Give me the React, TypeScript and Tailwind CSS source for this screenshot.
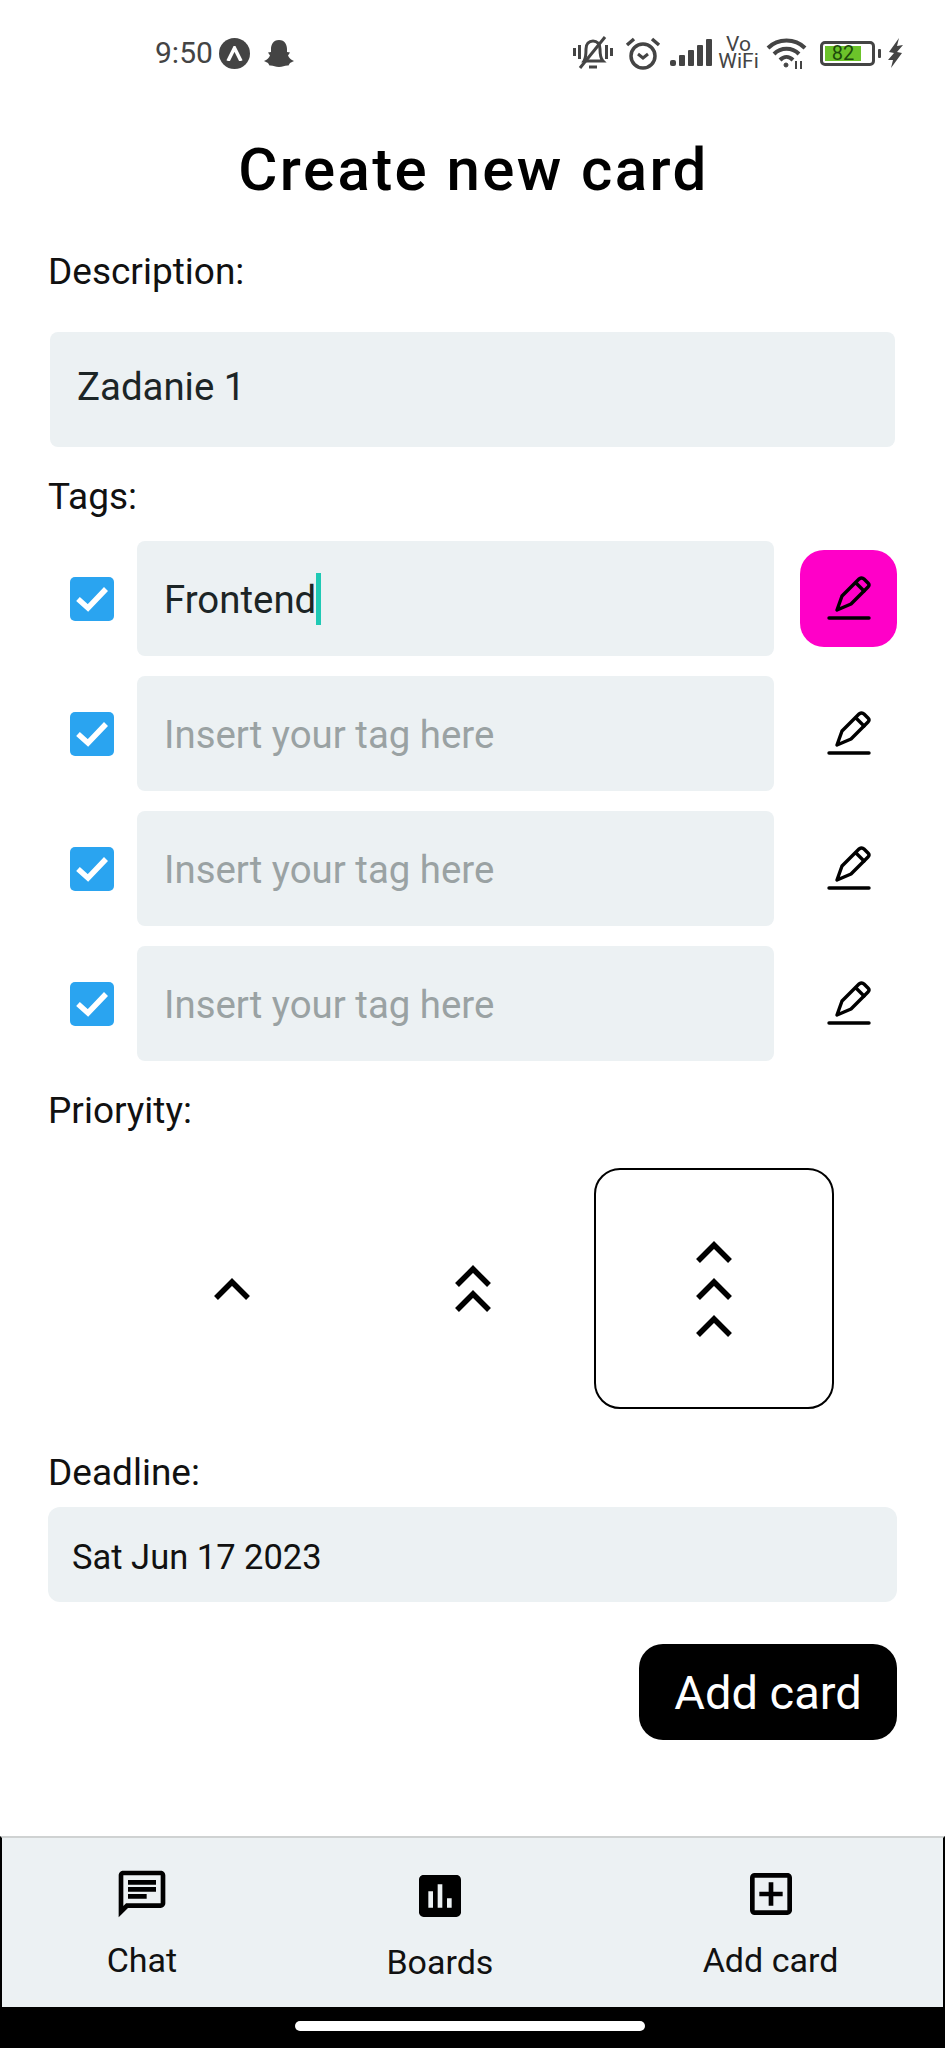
import { MdAssessment, MdOutlineAddBox, MdOutlineChat } from "react-icons/md";

const Pencil = () => (
  <svg width="46" height="46" viewBox="0 0 46 46" fill="none" stroke="#000" strokeWidth="3.4" strokeLinejoin="round" strokeLinecap="round">
    <path d="M11 34L16 20L33 3Q36 1 38 3L42 7Q44 9 42 11L25 28Z" />
    <path d="M30 7L38 15" />
    <path d="M3 42H43" />
  </svg>
);

const Chevron = () => (
  <svg width="36" height="22" viewBox="0 0 36 22" fill="none" stroke="#000" strokeWidth="5.5">
    <path d="M2 20L18 4L34 20" />
  </svg>
);

const Label = ({ children }: { children: string }) => (
  <div className="h-[44px] pt-[2px] text-[37px] leading-[44px] text-[#111]">{children}</div>
);

const Check = () => (
  <div className="flex h-[44px] w-[44px] shrink-0 items-center justify-center rounded-[5px] bg-[#2aa4f0]">
    <svg width="44" height="44" viewBox="0 0 44 44" fill="none" stroke="#fff" strokeWidth="5.5">
      <path d="M8 22L18 31L36 12" />
    </svg>
  </div>
);

const TagRow = ({ active }: { active?: boolean }) => (
  <div className="flex h-[115px] items-center pl-[22px]">
    <Check />
    <div className="ml-[23px] flex h-[115px] w-[637px] items-center rounded-[8px] bg-[#ecf1f3] pl-[27px] text-[38.400px]">
      {active ? (
        <>
          <span className="pt-[2px] text-[#1c2526]">Frontend</span>
          <span className="h-[52px] w-[5px] bg-[#1fc9b4]" />
        </>
      ) : (
        <span className="pt-[3px] text-[#9aa2a3]">Insert your tag here</span>
      )}
    </div>
    <div
      className={
        active
          ? "ml-[26px] flex h-[97px] w-[97px] items-center justify-center rounded-[24px] bg-[#ff00c8]"
          : "ml-[26px] flex h-[97px] w-[97px] items-center justify-center rounded-[24px]"
      }
    >
      <Pencil />
    </div>
  </div>
);

const StatusBar = () => (
  <div className="flex h-[104px] shrink-0 items-center pt-[2px] text-[#444]">
    <span className="ml-[155px] mb-[1px] text-[30px] leading-none">9:50</span>
    <div className="ml-[6px] flex h-[31px] w-[31px] items-center justify-center rounded-full bg-[#444]">
      <svg width="17" height="15" viewBox="0 0 17 15" fill="none" stroke="#fff" strokeWidth="3.500">
        <path d="M2 15L8.500 2L15 15" />
      </svg>
    </div>
    <svg className="ml-[14px]" width="30" height="27" viewBox="0 0 30 27" fill="#444">
      <path d="M15 0C21 0 23 5 23 9V12L26 12.500L24 15.500C25 18 27 20 30 21L26 23L24.500 25.500C21 25 19 27 15 27C11 27 9 25 5.500 25.500L4 23L0 21C3 20 5 18 6 15.500L4 12.500L7 12V9C7 5 9 0 15 0Z" />
    </svg>
    <div className="ml-auto mr-[42px] flex items-center">
      <svg width="40" height="34" viewBox="0 0 40 34" fill="none" stroke="#444" strokeWidth="3">
        <path d="M1.500 12V20M6.500 9V23M33.500 9V23M38.500 12V20" />
        <path d="M11 25C13 22 13 17 13 13C13 8 16 5 20 5C24 5 27 8 27 13C27 17 27 22 30 25Z" />
        <path d="M7 32L32 1" />
        <path d="M16 31H24" />
      </svg>
      <svg className="ml-[12px]" width="36" height="33" viewBox="0 0 36 33" fill="none" stroke="#444" strokeWidth="3.500">
        <circle cx="18" cy="19" r="12" />
        <path d="M13 17L18 21L23 17" strokeWidth="3" />
        <path d="M2 8L9 2M34 8L27 2" />
      </svg>
      <svg className="ml-[9px]" width="43" height="28" viewBox="0 0 43 28" fill="#444">
        <rect x="0" y="21" width="6" height="6" rx="2" />
        <rect x="9" y="16" width="6" height="11" rx="1" />
        <rect x="18" y="11" width="6" height="16" rx="1" />
        <rect x="27" y="6" width="6" height="21" rx="1" />
        <rect x="36" y="0" width="6" height="27" rx="1" />
      </svg>
      <div className="ml-[7px] flex w-[37px] flex-col items-center text-[21px] leading-[17px] font-normal">
        <span>Vo</span>
        <span>WiFi</span>
      </div>
      <svg className="ml-[9px]" width="41" height="32" viewBox="0 0 41 32" fill="none" stroke="#444" strokeWidth="4">
        <path d="M2 11C12 1 29 1 39 11" />
        <path d="M8 17C15 10 26 10 33 17" />
        <path d="M14 23C18 19 23 19 27 23" />
        <circle cx="20" cy="28" r="2" fill="#444" strokeWidth="1" />
        <path d="M30 24V32M35 24V32" strokeWidth="2" />
      </svg>
      <div className="ml-[13px] flex h-[25px] w-[55px] items-center rounded-[5px] border-[3px] border-[#444] p-[2px]">
        <div className="flex h-full w-[36px] items-center justify-center bg-[#6cc32a] text-[20px] leading-none text-[#1d4a0c]">
          82
        </div>
      </div>
      <div className="ml-[3px] h-[9px] w-[3px] rounded-[1px] bg-[#444]" />
      <svg className="ml-[7px]" width="15" height="30" viewBox="0 0 15 30" fill="#444">
        <path d="M11 0L1 14L6 15L0 22L5 22L3 30L14 15L9 14L15 7L9 8Z" />
      </svg>
    </div>
  </div>
);

const Tab = ({ label, icon, offset }: { label: string; icon: React.ReactNode; offset: string }) => (
  <div className={`flex flex-col items-center ${offset}`}>
    {icon}
    <span className="mt-[18px] text-[34px] leading-[40px] text-[#111]">{label}</span>
  </div>
);

export default function App() {
  return (
    <div className="flex h-[2048px] w-[945px] flex-col overflow-hidden bg-white font-['Roboto',sans-serif]">
      <StatusBar />
      <main className="flex-1 pl-[48px]">
        <h1 className="mt-[33px] h-[66px] w-[851px] text-center text-[60px] leading-[66px] font-medium tracking-[2.400px] text-black">
          Create new card
        </h1>
        <div className="mt-[45px]">
          <Label>Description:</Label>
        </div>
        <div className="mt-[40px] ml-[2px] flex h-[115px] w-[845px] items-center rounded-[8px] bg-[#ecf1f3] pb-[5px] pl-[27px] text-[38.400px] text-[#1c2526]">
          Zadanie 1
        </div>
        <div className="mt-[26px]">
          <Label>Tags:</Label>
        </div>
        <div className="mt-[24px] flex flex-col gap-[20px]">
          <TagRow active />
          <TagRow />
          <TagRow />
          <TagRow />
        </div>
        <div className="mt-[26px]">
          <Label>Prioryity:</Label>
        </div>
        <div className="mt-[37px] ml-[63.500px] flex">
          <div className="flex h-[241px] w-[241px] items-center justify-center">
            <Chevron />
          </div>
          <div className="flex h-[241px] w-[241px] flex-col items-center justify-center gap-[3px]">
            <Chevron />
            <Chevron />
          </div>
          <div className="flex h-[241px] w-[240px] flex-col items-center justify-center gap-[15px] rounded-[26px] border-[2.500px] border-black">
            <Chevron />
            <Chevron />
            <Chevron />
          </div>
        </div>
        <div className="mt-[40px]">
          <Label>Deadline:</Label>
        </div>
        <div className="mt-[14px] flex h-[95px] w-[849px] items-center rounded-[12px] bg-[#ecf1f3] pt-[6px] pl-[24px] text-[34.500px] text-[#111]">
          Sat Jun 17 2023
        </div>
        <div className="mt-[42px] flex w-[849px] justify-end">
          <div className="flex h-[96px] w-[258px] items-center justify-center rounded-[24px] bg-black pt-[2px] text-[47px] text-white">
            Add card
          </div>
        </div>
      </main>
      <nav className="flex h-[171px] shrink-0 justify-around border-x-2 border-t-2 border-x-black border-t-[#cfd2d2] bg-[#ecf1f3]">
        <Tab label="Chat" offset="mt-[28px]" icon={<MdOutlineChat size={56} color="#000" />} />
        <Tab label="Boards" offset="mt-[30px]" icon={<MdAssessment size={56} color="#000" />} />
        <Tab label="Add card" offset="mt-[28px]" icon={<MdOutlineAddBox size={56} color="#000" />} />
      </nav>
      <div className="flex h-[41px] shrink-0 justify-center bg-black pt-[14px]">
        <div className="mr-[5px] h-[10px] w-[350px] rounded-full bg-white" />
      </div>
    </div>
  );
}
